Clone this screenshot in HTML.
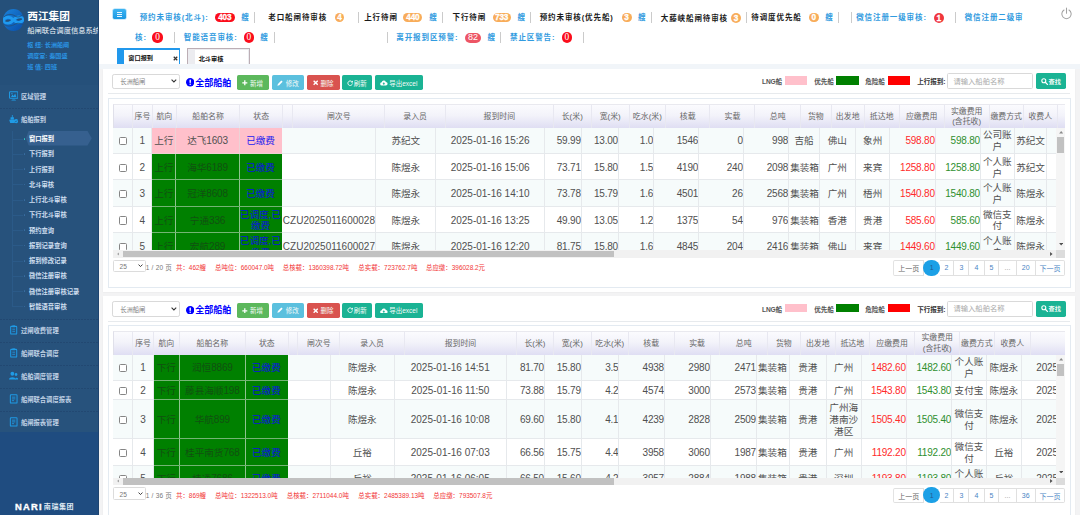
<!DOCTYPE html><html lang="zh-CN"><head><meta charset="utf-8"><title>船闸联合调度信息系统</title><style>
*{box-sizing:border-box;margin:0;padding:0}
html,body{width:1080px;height:515px;overflow:hidden;background:#f3f3f4}
body{position:relative;font-family:"Liberation Sans","Noto Sans CJK SC",sans-serif;color:#444;font-size:9.3px}
.a{position:absolute}
.c{position:absolute;display:flex;align-items:center;justify-content:center;white-space:nowrap}
#side{left:0;top:0;width:99px;height:515px;background:linear-gradient(#25507a 0,#25507a 84.8px,#27527c 84.8px,#27527c 432px,#1f4c80 432px);overflow:hidden;border-right:1px solid #1e4470}
#top{left:99px;top:0;width:981px;height:64px;background:#fff}
.t{position:absolute;white-space:nowrap;font-weight:bold;font-size:7.5px;letter-spacing:.9px;line-height:10px;height:10px}
.bl{color:#319be0}
.bk{color:#1a1a1a}
.sep{position:absolute;width:1px;height:11px;background:#cbcbcb}
.bd{position:absolute;height:9.4px;border-radius:5px;color:#fff;font-weight:bold;font-size:8.2px;letter-spacing:-.1px;display:flex;align-items:center;justify-content:center;line-height:1;padding-top:1.3px;-webkit-text-stroke:.3px #fff}
.or{background:#f8ac59}
.rd{background:#fb0d1b}
.panel{position:absolute;left:103.3px;width:972px;height:223px;background:#fff;box-shadow:0 .5px 1.5px rgba(0,0,0,.06)}
.btn{position:absolute;top:6.5px;height:15.3px;border-radius:1.7px;color:#f4fbf8;font-size:6.5px;font-weight:normal;display:flex;align-items:center;justify-content:center;white-space:nowrap}
.lg{position:absolute;top:9.6px;height:7px;line-height:7px;font-size:6.6px;font-weight:bold;color:#555;white-space:nowrap;letter-spacing:-.1px}
.sw{position:absolute;top:7.7px;height:8.5px;width:22.4px}
.hd{position:absolute;width:952.2px;border-top:1px solid #e9e9ef;border-left:1px solid #e0e0ea;background:linear-gradient(#fbfbfe 0%,#f3f3fa 45%,#dfdef3 100%);overflow:hidden}
.hc{position:absolute;top:0;height:100%;border-left:1px solid #e8e8f1;display:flex;align-items:center;justify-content:center;text-align:center;font-size:7.9px;line-height:10.6px;color:#666;white-space:nowrap;padding-top:1.3px}
.bdy{position:absolute;width:942.7px;overflow:hidden;background:#fff}
.r{position:absolute;left:0;width:100%;border-bottom:1px solid #e6e9ec}
.r.o{background:#f6fbfb}
.d{position:absolute;top:0;height:100%;border-right:1px solid #e6e9ec;display:flex;z-index:0;align-items:center;justify-content:center;text-align:center;font-size:9.6px;line-height:11.8px;color:#505050;overflow:hidden;padding-top:1.8px}
.d.n{justify-content:flex-end;padding-right:0}
.g{background:#008000;color:#115011;border-right-color:#8fc48f;box-shadow:0 1px 0 #74b474}
.pk{background:#ffc0cb;border-right-color:#ecd3d6;box-shadow:0 1px 0 #f0d0d4}
.dg{font-size:10px;letter-spacing:-.2px}
.st{color:#1a1af0}
.g.st{color:#0a10e0;border-right-color:#008000}
.pk.st{border-right-color:#ffc0cb}
.red{color:#ff2a2a}
.grn{color:#2f8f2f}
.cb{width:8.2px;height:8.2px;border:1px solid #858585;border-radius:1.5px;background:#fff}
.pg{position:absolute;top:191.7px;height:15.2px;border:1px solid #e0e0e0;border-left:none;background:#fff;color:#4a84c4;font-size:7px;display:flex;align-items:center;justify-content:center}
.stt{position:absolute;top:195.8px;font-size:6.45px;line-height:8px;color:#f23535;white-space:nowrap}
.mi{position:absolute;left:20.9px;font-size:6.3px;font-weight:bold;color:#c2d2e6;white-space:nowrap;line-height:8px;height:8px}
.sm{position:absolute;left:28.9px;font-size:6.3px;font-weight:bold;color:#cfdff0;white-space:nowrap;line-height:8px;height:8px}
.dsep{position:absolute;left:0;width:99px;height:1px;background:repeating-linear-gradient(90deg,rgba(20,44,84,.26) 0,rgba(20,44,84,.26) 1.8px,transparent 1.8px,transparent 3px)}
</style></head><body>
<div id="side" class="a">
<svg class="a" style="left:2.9px;top:8.8px" width="21" height="22" viewBox="0 0 42 44">
<defs><linearGradient id="lg1" x1="0" y1="0" x2="1" y2="1"><stop offset="0" stop-color="#1b84dc"/><stop offset=".45" stop-color="#126ac4"/><stop offset="1" stop-color="#0a4ca8"/></linearGradient>
<clipPath id="cp1"><ellipse cx="21" cy="22" rx="21" ry="22"/></clipPath></defs>
<g clip-path="url(#cp1)">
<rect width="42" height="44" fill="url(#lg1)"/>
<path d="M-1 24 C5 14 14 15 21 22 S36 29 43 20" stroke="#1f9af0" stroke-width="6" fill="none"/>
<path d="M-1 22 C5 30 14 30 21 22 S36 14 43 22" stroke="#1f9af0" stroke-width="6" fill="none"/>
<path d="M2 15.500 C10 9 18 10 24 14 S35 15 41 11" stroke="#25507a" stroke-width="2" fill="none" opacity=".85"/>
<path d="M2 31 C9 36 18 34 24 30.500 S35 29 41 32" stroke="#25507a" stroke-width="2" fill="none" opacity=".85"/>
<ellipse cx="10" cy="23.500" rx="5.500" ry="1.900" fill="#25507a" transform="rotate(-8 10 23.500)"/>
<ellipse cx="33" cy="20.800" rx="5.500" ry="1.900" fill="#25507a" transform="rotate(-8 33 20.800)"/>
</g>
</svg>
<div class="a" style="left:27.2px;top:9.6px;font-size:10.7px;line-height:13px;font-weight:bold;color:#fff;white-space:nowrap">西江集团</div>
<div class="a" style="left:27.2px;top:26.2px;font-size:7.3px;line-height:10px;color:#eef3f8;white-space:nowrap">船闸联合调度信息系统</div>
<div class="a" style="left:27.2px;top:40.7px;font-size:6.1px;line-height:8px;font-weight:bold;color:#2b93e3;white-space:nowrap">枢 纽: 长洲船闸</div>
<div class="a" style="left:27.2px;top:51.9px;font-size:6.1px;line-height:8px;font-weight:bold;color:#2b93e3;white-space:nowrap">调度室: 秦国盛</div>
<div class="a" style="left:27.2px;top:63.1px;font-size:6.1px;line-height:8px;font-weight:bold;color:#2b93e3;white-space:nowrap">班 值: 四班</div>
<svg class="a" style="left:8.7px;top:91.2px" width="9.4" height="9.800" viewBox="0 0 14 14" preserveAspectRatio="none"><rect x=".8" y="1" width="12.4" height="9.4" rx="1" fill="none" stroke="#1f9be6" stroke-width="1.5"/><path d="M3.500 13.4c0-1.800 7-1.800 7 0z" fill="#1f9be6"/><path d="M3 8.600l2.200-3.600 1.800 2 2.200-3.400 1.800 5z" fill="#1f9be6"/><circle cx="4.400" cy="3.900" r="1" fill="#1f9be6"/></svg>
<div class="mi" style="top:92.5px">区域管理</div>
<svg class="a" style="left:8.7px;top:114.2px" width="9.4" height="9.800" viewBox="0 0 14 14" preserveAspectRatio="none"><path d="M.3 8.200h9.400l-1.300 4.600h-6.600z M2.300 8V4.600h5V8z M4.300 4.600V1.600h1.200v3z" fill="#1f9be6"/><circle cx="10.600" cy="10.300" r="3" fill="#1f9be6"/><path d="M9.200 10.300l1 1 1.800-2" stroke="#27527c" stroke-width=".9" fill="none"/></svg>
<div class="mi" style="top:115.5px">船舶报到</div>
<svg class="a" style="left:8.7px;top:325.2px" width="9.4" height="9.800" viewBox="0 0 14 14" preserveAspectRatio="none"><rect x="2.5" y="2" width="9" height="11" rx="1" fill="none" stroke="#1f9be6" stroke-width="1.5"/><rect x="5" y="0.6" width="4" height="2.6" fill="#1f9be6"/><path d="M5 6h4M5 9h4" stroke="#1f9be6" stroke-width="1.2"/></svg>
<div class="mi" style="top:326.5px">过闸收费管理</div>
<svg class="a" style="left:8.7px;top:348.2px" width="9.4" height="9.800" viewBox="0 0 14 14" preserveAspectRatio="none"><rect x="2.5" y="2" width="9" height="11" rx="1" fill="none" stroke="#1f9be6" stroke-width="1.5"/><rect x="5" y="0.6" width="4" height="2.6" fill="#1f9be6"/><path d="M5 6h4M5 9h4" stroke="#1f9be6" stroke-width="1.2"/></svg>
<div class="mi" style="top:349.5px">船闸联合调度</div>
<svg class="a" style="left:8.7px;top:371.2px" width="9.4" height="9.800" viewBox="0 0 14 14" preserveAspectRatio="none"><circle cx="5" cy="4" r="2.8" fill="#1f9be6"/><path d="M0 12c0-4 10-4 10 0z" fill="#1f9be6"/><circle cx="10.5" cy="5" r="2" fill="#1f9be6"/><path d="M9 12c0-3 5-3 5 0z" fill="#1f9be6"/></svg>
<div class="mi" style="top:372.5px">船舶调度管理</div>
<svg class="a" style="left:8.7px;top:394.2px" width="9.4" height="9.800" viewBox="0 0 14 14" preserveAspectRatio="none"><rect x="2" y="1" width="10" height="12" rx="1" fill="none" stroke="#1f9be6" stroke-width="1.5"/><path d="M4.5 4.5h5M4.5 7h5M4.5 9.5h3" stroke="#1f9be6" stroke-width="1.2"/></svg>
<div class="mi" style="top:395.5px">船闸联合调度报表</div>
<svg class="a" style="left:8.7px;top:417.2px" width="9.4" height="9.800" viewBox="0 0 14 14" preserveAspectRatio="none"><rect x="2" y="1" width="10" height="12" rx="1" fill="none" stroke="#1f9be6" stroke-width="1.5"/><path d="M4.5 4.5h5M4.5 7h5M4.5 9.5h3" stroke="#1f9be6" stroke-width="1.2"/></svg>
<div class="mi" style="top:418.5px">船闸报表管理</div>
<div class="dsep" style="top:108.0px"></div>
<div class="dsep" style="top:318.6px"></div>
<div class="dsep" style="top:341.8px"></div>
<div class="dsep" style="top:364.9px"></div>
<div class="dsep" style="top:388.0px"></div>
<div class="dsep" style="top:411.1px"></div>
<div class="a" style="left:12px;top:131px;width:1px;height:176px;background:#2b5a88"></div>
<svg class="a" style="left:26.3px;top:131.1px" width="65.8" height="14.6" viewBox="0 0 65.8 14.6"><path d="M2.6 0H61.5L65.8 7.3 61.5 14.6H2.6L0 7.3z" fill="#36608f"/></svg>
<div class="a" style="left:12px;top:138.6px;width:11px;height:1px;background:#2b5a88"></div>
<div class="a" style="left:23.5px;top:137.8px;width:1.8px;height:1.8px;border-radius:1px;background:#35c8c8"></div>
<div class="sm" style="color:#fff;top:135.1px">窗口报到</div>
<div class="a" style="left:12px;top:153.8px;width:11px;height:1px;background:#2b5a88"></div>
<div class="a" style="left:23.5px;top:153.0px;width:1.8px;height:1.8px;border-radius:1px;background:#3a6fa3"></div>
<div class="sm" style="top:150.3px">下行报到</div>
<div class="a" style="left:12px;top:169.1px;width:11px;height:1px;background:#2b5a88"></div>
<div class="a" style="left:23.5px;top:168.3px;width:1.8px;height:1.8px;border-radius:1px;background:#3a6fa3"></div>
<div class="sm" style="top:165.6px">上行报到</div>
<div class="a" style="left:12px;top:184.3px;width:11px;height:1px;background:#2b5a88"></div>
<div class="a" style="left:23.5px;top:183.5px;width:1.8px;height:1.8px;border-radius:1px;background:#3a6fa3"></div>
<div class="sm" style="top:180.8px">北斗审核</div>
<div class="a" style="left:12px;top:199.6px;width:11px;height:1px;background:#2b5a88"></div>
<div class="a" style="left:23.5px;top:198.8px;width:1.8px;height:1.8px;border-radius:1px;background:#3a6fa3"></div>
<div class="sm" style="top:196.1px">上行北斗审核</div>
<div class="a" style="left:12px;top:214.8px;width:11px;height:1px;background:#2b5a88"></div>
<div class="a" style="left:23.5px;top:214.0px;width:1.8px;height:1.8px;border-radius:1px;background:#3a6fa3"></div>
<div class="sm" style="top:211.3px">下行北斗审核</div>
<div class="a" style="left:12px;top:230.1px;width:11px;height:1px;background:#2b5a88"></div>
<div class="a" style="left:23.5px;top:229.3px;width:1.8px;height:1.8px;border-radius:1px;background:#3a6fa3"></div>
<div class="sm" style="top:226.6px">预约查询</div>
<div class="a" style="left:12px;top:245.3px;width:11px;height:1px;background:#2b5a88"></div>
<div class="a" style="left:23.5px;top:244.5px;width:1.8px;height:1.8px;border-radius:1px;background:#3a6fa3"></div>
<div class="sm" style="top:241.8px">报到记录查询</div>
<div class="a" style="left:12px;top:260.6px;width:11px;height:1px;background:#2b5a88"></div>
<div class="a" style="left:23.5px;top:259.8px;width:1.8px;height:1.8px;border-radius:1px;background:#3a6fa3"></div>
<div class="sm" style="top:257.1px">报到修改记录</div>
<div class="a" style="left:12px;top:275.9px;width:11px;height:1px;background:#2b5a88"></div>
<div class="a" style="left:23.5px;top:275.1px;width:1.8px;height:1.8px;border-radius:1px;background:#3a6fa3"></div>
<div class="sm" style="top:272.4px">微信注册审核</div>
<div class="a" style="left:12px;top:291.1px;width:11px;height:1px;background:#2b5a88"></div>
<div class="a" style="left:23.5px;top:290.3px;width:1.8px;height:1.8px;border-radius:1px;background:#3a6fa3"></div>
<div class="sm" style="top:287.6px">微信注册审核记录</div>
<div class="a" style="left:12px;top:306.4px;width:11px;height:1px;background:#2b5a88"></div>
<div class="a" style="left:23.5px;top:305.6px;width:1.8px;height:1.8px;border-radius:1px;background:#3a6fa3"></div>
<div class="sm" style="top:302.9px">智能语音审核</div>
<div class="a" style="left:15px;top:500.6px;font-size:9.4px;line-height:11px;font-weight:bold;color:#fff;letter-spacing:1.25px;-webkit-text-stroke:.35px #fff;white-space:nowrap">NARI</div>
<div class="a" style="left:43.8px;top:502px;font-size:7px;line-height:9px;font-weight:bold;color:#dfe8f2;letter-spacing:.6px;white-space:nowrap">南瑞集团</div>
</div>
<div id="top" class="a">
<div class="a" style="left:13.5px;top:9.2px;width:13.3px;height:9.6px;border-radius:1.6px;background:linear-gradient(#3db4f2,#1b98e2);box-shadow:0 0 0 .6px #9bd6f7"></div>
<div class="a" style="left:17.6px;top:11.6px;width:5.2px;height:1px;background:#e8f6ff"></div>
<div class="a" style="left:17.6px;top:13.6px;width:5.2px;height:1px;background:#e8f6ff"></div>
<div class="a" style="left:17.6px;top:15.6px;width:5.2px;height:1px;background:#e8f6ff"></div>
<div class="t bl" style="left:40.7px;top:12.8px">预约未审核(北斗):</div>
<div class="bd rd" style="left:116.0px;width:19.7px;top:12.5px;">403</div>
<div class="t bl" style="left:142.3px;top:12.8px">艘</div>
<div class="sep" style="left:154.7px;top:11.7px"></div>
<div class="t bk" style="left:169.3px;top:12.8px">老口船闸待审核</div>
<div class="bd or" style="left:235.7px;width:9.6px;top:12.7px;">4</div>
<div class="sep" style="left:258.8px;top:11.7px"></div>
<div class="t bk" style="left:265.2px;top:12.8px">上行待闸</div>
<div class="bd or" style="left:304.3px;width:19.2px;top:12.5px;">440</div>
<div class="t bl" style="left:330.2px;top:12.8px">艘</div>
<div class="sep" style="left:343.0px;top:11.7px"></div>
<div class="t bk" style="left:353.5px;top:12.8px">下行待闸</div>
<div class="bd or" style="left:393.5px;width:18.3px;top:12.5px;">733</div>
<div class="t bl" style="left:418.5px;top:12.8px">艘</div>
<div class="sep" style="left:431.0px;top:11.7px"></div>
<div class="t bk" style="left:440.7px;top:12.8px">预约未审核(优先船)</div>
<div class="bd or" style="left:522.5px;width:10.0px;top:12.5px;">3</div>
<div class="t bl" style="left:539.0px;top:12.8px">艘</div>
<div class="sep" style="left:551.8px;top:11.7px"></div>
<div class="t bk" style="left:561.8px;top:13.6px">大藤峡船闸待审核</div>
<div class="bd or" style="left:632.0px;width:10.0px;top:13.3px;">3</div>
<div class="sep" style="left:646.8px;top:11.7px"></div>
<div class="t bk" style="left:652.3px;top:12.8px">待调度优先船</div>
<div class="bd or" style="left:709.7px;width:10.0px;top:12.5px;">0</div>
<div class="t bl" style="left:726.3px;top:12.8px">艘</div>
<div class="sep" style="left:738.8px;top:11.7px"></div>
<div class="sep" style="left:751.8px;top:11.7px"></div>
<div class="t bl" style="left:757.2px;top:12.8px">微信注册一级审核:</div>
<div class="bd rd" style="left:834.6px;width:10.6px;top:12.5px;background:#f0363c;font-size:8.4px;height:10px">1</div>
<div class="sep" style="left:855.8px;top:11.7px"></div>
<div class="t bl" style="left:865.7px;top:12.8px">微信注册二级审</div>
<svg class="a" style="left:961.2px;top:7.4px" width="13" height="13" viewBox="0 0 20 20"><path d="M6.2 4.6a7.2 7.2 0 1 0 7.6 0" fill="none" stroke="#a2a2a2" stroke-width="1.6" stroke-linecap="round"/><path d="M10 1.5v8" stroke="#a2a2a2" stroke-width="1.6" stroke-linecap="round"/></svg>
<div class="t bl" style="left:36.0px;top:33.2px">核:</div>
<div class="bd rd" style="left:53.3px;width:10.7px;top:33.0px;-webkit-text-stroke:0;font-weight:normal;font-family:'Liberation Serif',serif;font-size:9.4px;height:10.4px;top:32.3px">0</div>
<div class="sep" style="left:74.7px;top:31.7px"></div>
<div class="t bl" style="left:84.8px;top:33.2px">智能语音审核:</div>
<div class="bd rd" style="left:144.7px;width:10.3px;top:33.0px;-webkit-text-stroke:0;font-weight:normal;font-family:'Liberation Serif',serif;font-size:9.4px;height:10.4px;top:32.3px">0</div>
<div class="t bl" style="left:161.3px;top:33.2px">艘</div>
<div class="sep" style="left:174.7px;top:31.7px"></div>
<div class="sep" style="left:288.0px;top:31.7px"></div>
<div class="t bl" style="left:297.3px;top:33.2px">离开报到区预警:</div>
<div class="bd rd" style="left:366.0px;width:15.8px;top:32.9px;-webkit-text-stroke:0;background:#ed5565;font-weight:normal;font-size:9px;height:10px;top:32.5px;padding-top:.6px">82</div>
<div class="t bl" style="left:388.5px;top:33.2px">艘</div>
<div class="sep" style="left:400.8px;top:31.7px"></div>
<div class="t bl" style="left:411.0px;top:33.2px">禁止区警告:</div>
<div class="bd rd" style="left:462.6px;width:10.3px;top:33.0px;-webkit-text-stroke:0;font-weight:normal;font-family:'Liberation Serif',serif;font-size:9.4px;height:10.4px;top:32.3px">0</div>
<div class="sep" style="left:483.5px;top:31.7px"></div>
<div class="a" style="left:18.2px;top:48.1px;width:62.6px;height:15.9px;background:#fff;border-top:2px solid #2198ec;border-right:1.3px solid #2198ec;border-left:7px solid #2198ec;border-radius:1px 1px 0 0"></div>
<div class="a" style="left:29.3px;top:53.4px;font-size:6.2px;line-height:9px;font-weight:bold;color:#111;white-space:nowrap">窗口报到</div>
<svg class="a" style="left:74px;top:55.6px" width="5" height="5" viewBox="0 0 10 10"><path d="M1.5 1.5l7 7M8.500 1.500l-7 7" stroke="#333" stroke-width="2.4"/></svg>
<div class="a" style="left:87.6px;top:48.3px;width:63px;height:15.7px;background:#ececf0;border:1px solid #bcaeb5;border-bottom:none"></div>
<div class="a" style="left:95.6px;top:50.4px;width:53.6px;height:13.6px;background:#fff"></div>
<div class="a" style="left:99.7px;top:53.6px;font-size:6.2px;line-height:9px;font-weight:bold;color:#111;white-space:nowrap">北斗审核</div>
</div>
<div class="a" style="left:99px;top:64px;width:981px;height:4.9px;background:#f1f5f9"></div>
<div class="panel" style="top:68.7px">
<div class="a" style="left:9.1px;top:5.1px;width:67.5px;height:15.3px;border:1px solid #d9d9d9;border-radius:2.2px;background:#fff"></div>
<div class="a" style="left:16.9px;top:9.5px;font-size:6.3px;line-height:8px;color:#808080;white-space:nowrap">长洲船闸</div>
<svg class="a" style="left:68px;top:10.8px" width="5.8" height="4.2" viewBox="0 0 10 7"><path d="M1 1l4 4 4-4" fill="none" stroke="#333" stroke-width="1.8"/></svg>
<svg class="a" style="left:82.5px;top:9.5px" width="8.4" height="8.4" viewBox="0 0 12 12"><circle cx="6" cy="6" r="6" fill="#0000ff"/><rect x="5" y="2" width="2" height="5" rx=".8" fill="#fff"/><circle cx="6" cy="9" r="1.1" fill="#fff"/></svg>
<div class="a" style="left:92px;top:7.9px;font-size:9px;line-height:12px;font-weight:bold;color:#0000ff;white-space:nowrap">全部船舶</div>
<div class="btn" style="left:133.4px;width:32.1px;background:#5cb85c"><svg width="5.6" height="5.6" viewBox="0 0 10 10" style="margin-right:2px"><path d="M5 .5v9M.5 5h9" stroke="#fff" stroke-width="2.3"/></svg>新增</div>
<div class="btn" style="left:168.7px;width:32.2px;background:#5bc0de"><svg width="6.2" height="6.2" viewBox="0 0 10 10" style="margin-right:2.2px"><path d="M.6 9.4l.9-2.9 5.6-5.6 2 2-5.6 5.6z" fill="#fff"/></svg>修改</div>
<div class="btn" style="left:203.4px;width:33.0px;background:#d9534f"><svg width="5.4" height="5.4" viewBox="0 0 10 10" style="margin-right:2.4px"><path d="M1.2 1.2l7.6 7.6M8.8 1.2l-7.6 7.6" stroke="#fff" stroke-width="2.6"/></svg>删除</div>
<div class="btn" style="left:238.7px;width:30.0px;background:#1ab394"><svg width="6.4" height="6.4" viewBox="0 0 12 12" style="margin-right:0"><path d="M10.2 6.6a4.3 4.3 0 1 1-1.2-3.6" fill="none" stroke="#fff" stroke-width="1.7"/><path d="M11.2 .8v4H7.2z" fill="#fff"/></svg>刷新</div>
<div class="btn" style="left:271.4px;width:48.0px;background:#1ab394"><svg width="7.6" height="5.6" viewBox="0 0 14 10" style="margin-right:1.6px"><path d="M3.5 10a3 3 0 0 1-.4-6 4 4 0 0 1 7.7-.4A3.2 3.2 0 0 1 10.8 10z" fill="#fff"/><path d="M7 3.8l2.4 2.8H8v2.2H6V6.6H4.600z" fill="#1ab394"/></svg>导出excel</div>
<div class="lg" style="left:658.7px">LNG船</div><div class="sw" style="left:681.7px;background:#ffc0cb"></div>
<div class="lg" style="left:710.9px">优先船</div><div class="sw" style="left:732.9px;background:#008000"></div>
<div class="lg" style="left:762.0px">危险船</div><div class="sw" style="left:784.3px;background:#ff0000"></div>
<div class="lg" style="left:813.9px;font-size:6.6px;color:#333">上行报到:</div>
<div class="a" style="left:843.9px;top:4.7px;width:86.3px;height:15.7px;border:1px solid #d9d9d9;border-radius:1.6px;background:#fff"></div>
<div class="a" style="left:850.2px;top:8px;font-size:7.3px;line-height:9px;color:#aaa;white-space:nowrap">请输入船舶名称</div>
<div class="btn" style="left:932.5px;width:30.6px;top:4.7px;height:15.8px;background:#1ab394;font-size:6.2px;font-weight:bold"><svg width="7" height="7" viewBox="0 0 12 12" style="margin-right:.3px"><circle cx="4.8" cy="4.8" r="3.4" fill="none" stroke="#fff" stroke-width="1.9"/><path d="M7.4 7.4l3.6 3.6" stroke="#fff" stroke-width="2.2" stroke-linecap="round"/></svg>查找</div>
<div class="a" style="left:4.7px;top:24.5px;width:962.5px;height:1px;background:#e7eaed"></div>
<div class="a" style="left:5px;top:29px;width:962.4px;height:190.3px;border:1px solid #e3eaf1"></div>
<div class="hd" style="left:10.0px;top:35.70px;height:23.20px">
<div class="hc" style="border-left:none;left:-1.5px;width:19.2px"></div>
<div class="hc" style="left:17.7px;width:20.0px">序号</div>
<div class="hc" style="left:37.7px;width:23.7px">航向</div>
<div class="hc" style="left:61.4px;width:63.8px">船舶名称</div>
<div class="hc" style="left:125.2px;width:42.5px">状态</div>
<div class="hc" style="left:167.7px;width:10.0px"></div>
<div class="hc" style="left:177.7px;width:92.5px">闸次号</div>
<div class="hc" style="left:270.2px;width:60.3px">录入员</div>
<div class="hc" style="left:330.5px;width:108.0px">报到时间</div>
<div class="hc" style="left:438.5px;width:37.9px">长(米)</div>
<div class="hc" style="left:476.4px;width:38.0px">宽(米)</div>
<div class="hc" style="left:514.4px;width:36.3px">吃水(米)</div>
<div class="hc" style="left:550.7px;width:44.5px">核载</div>
<div class="hc" style="left:595.2px;width:45.0px">实载</div>
<div class="hc" style="left:640.2px;width:45.5px">总吨</div>
<div class="hc" style="left:685.7px;width:30.7px">货物</div>
<div class="hc" style="left:716.4px;width:33.0px">出发地</div>
<div class="hc" style="left:749.4px;width:35.0px">抵达地</div>
<div class="hc" style="left:784.4px;width:45.0px">应缴费用</div>
<div class="hc" style="left:829.4px;width:45.0px">实缴费用<br>(含托收)</div>
<div class="hc" style="left:874.4px;width:34.1px">缴费方式</div>
<div class="hc" style="left:908.5px;width:33.9px">收费人</div>
<div class="hc" style="left:942.4px;width:8.3px"></div>
</div>
<div class="bdy" style="left:10.0px;top:58.90px;height:122.60px">
<div class="r o" style="top:0.0px;height:26.4px">
<div class="d" style="left:0.0px;width:19.7px"><div class="cb"></div></div>
<div class="d" style="font-size:10px;letter-spacing:-.2px;left:19.7px;width:19.2px">1</div>
<div class="d pk" style="left:38.9px;width:24.1px">上行</div>
<div class="d pk" style="left:63.0px;width:63.4px">达飞<span class="dg">1603</span></div>
<div class="d pk st" style="left:126.4px;width:42.8px">已缴费</div>
<div class="d" style="white-space:nowrap;font-size:10px;left:169.2px;width:93.8px"></div>
<div class="d" style="left:263.0px;width:60.0px">苏纪文</div>
<div class="d" style="white-space:nowrap;font-size:10px;left:323.0px;width:108.7px">2025-01-16 15:26</div>
<div class="d n" style="font-size:10px;letter-spacing:-.2px;left:431.7px;width:36.8px">59.99</div>
<div class="d n" style="font-size:10px;letter-spacing:-.2px;left:468.5px;width:37.2px">13.00</div>
<div class="d n" style="font-size:10px;letter-spacing:-.2px;left:505.7px;width:35.2px">1.0</div>
<div class="d n" style="font-size:10px;letter-spacing:-.2px;left:540.9px;width:45.0px">1546</div>
<div class="d n" style="font-size:10px;letter-spacing:-.2px;left:585.9px;width:44.6px">0</div>
<div class="d n" style="font-size:10px;letter-spacing:-.2px;left:630.5px;width:45.4px">998</div>
<div class="d" style="justify-content:flex-start;padding-left:1px;white-space:nowrap;left:675.9px;width:30.8px"><span style="margin-left:4.2px">吉船</span></div>
<div class="d" style="left:706.7px;width:35.8px">佛山</div>
<div class="d" style="left:742.5px;width:34.7px">象州</div>
<div class="d n red" style="font-size:10px;letter-spacing:-.2px;left:777.2px;width:45.3px">598.80</div>
<div class="d n grn" style="font-size:10px;letter-spacing:-.2px;left:822.5px;width:45.2px">598.80</div>
<div class="d" style="left:867.7px;width:33.7px">公司账<br>户</div>
<div class="d" style="left:901.4px;width:32.8px">苏纪文</div>
<div class="d" style="justify-content:flex-start;padding-left:14.5px;white-space:nowrap;border-right:none;font-size:10px;letter-spacing:-.2px;left:934.2px;width:28.0px"></div>
</div>
<div class="r" style="top:26.4px;height:26.5px">
<div class="d" style="left:0.0px;width:19.7px"><div class="cb"></div></div>
<div class="d" style="font-size:10px;letter-spacing:-.2px;left:19.7px;width:19.2px">2</div>
<div class="d g" style="left:38.9px;width:24.1px">上行</div>
<div class="d g" style="left:63.0px;width:63.4px">海华<span class="dg">6189</span></div>
<div class="d g st" style="left:126.4px;width:42.8px">已缴费</div>
<div class="d" style="white-space:nowrap;font-size:10px;left:169.2px;width:93.8px"></div>
<div class="d" style="left:263.0px;width:60.0px">陈煜永</div>
<div class="d" style="white-space:nowrap;font-size:10px;left:323.0px;width:108.7px">2025-01-16 15:06</div>
<div class="d n" style="font-size:10px;letter-spacing:-.2px;left:431.7px;width:36.8px">73.71</div>
<div class="d n" style="font-size:10px;letter-spacing:-.2px;left:468.5px;width:37.2px">15.80</div>
<div class="d n" style="font-size:10px;letter-spacing:-.2px;left:505.7px;width:35.2px">1.5</div>
<div class="d n" style="font-size:10px;letter-spacing:-.2px;left:540.9px;width:45.0px">4190</div>
<div class="d n" style="font-size:10px;letter-spacing:-.2px;left:585.9px;width:44.6px">240</div>
<div class="d n" style="font-size:10px;letter-spacing:-.2px;left:630.5px;width:45.4px">2098</div>
<div class="d" style="justify-content:flex-start;padding-left:1px;white-space:nowrap;left:675.9px;width:30.8px">集装箱</div>
<div class="d" style="left:706.7px;width:35.8px">广州</div>
<div class="d" style="left:742.5px;width:34.7px">来宾</div>
<div class="d n red" style="font-size:10px;letter-spacing:-.2px;left:777.2px;width:45.3px">1258.80</div>
<div class="d n grn" style="font-size:10px;letter-spacing:-.2px;left:822.5px;width:45.2px">1258.80</div>
<div class="d" style="left:867.7px;width:33.7px">个人账<br>户</div>
<div class="d" style="left:901.4px;width:32.8px">苏纪文</div>
<div class="d" style="justify-content:flex-start;padding-left:14.5px;white-space:nowrap;border-right:none;font-size:10px;letter-spacing:-.2px;left:934.2px;width:28.0px"></div>
</div>
<div class="r o" style="top:52.9px;height:26.3px">
<div class="d" style="left:0.0px;width:19.7px"><div class="cb"></div></div>
<div class="d" style="font-size:10px;letter-spacing:-.2px;left:19.7px;width:19.2px">3</div>
<div class="d g" style="left:38.9px;width:24.1px">上行</div>
<div class="d g" style="left:63.0px;width:63.4px">冠洋<span class="dg">8608</span></div>
<div class="d g st" style="left:126.4px;width:42.8px">已缴费</div>
<div class="d" style="white-space:nowrap;font-size:10px;left:169.2px;width:93.8px"></div>
<div class="d" style="left:263.0px;width:60.0px">陈煜永</div>
<div class="d" style="white-space:nowrap;font-size:10px;left:323.0px;width:108.7px">2025-01-16 14:10</div>
<div class="d n" style="font-size:10px;letter-spacing:-.2px;left:431.7px;width:36.8px">73.78</div>
<div class="d n" style="font-size:10px;letter-spacing:-.2px;left:468.5px;width:37.2px">15.79</div>
<div class="d n" style="font-size:10px;letter-spacing:-.2px;left:505.7px;width:35.2px">1.6</div>
<div class="d n" style="font-size:10px;letter-spacing:-.2px;left:540.9px;width:45.0px">4501</div>
<div class="d n" style="font-size:10px;letter-spacing:-.2px;left:585.9px;width:44.6px">26</div>
<div class="d n" style="font-size:10px;letter-spacing:-.2px;left:630.5px;width:45.4px">2568</div>
<div class="d" style="justify-content:flex-start;padding-left:1px;white-space:nowrap;left:675.9px;width:30.8px">集装箱</div>
<div class="d" style="left:706.7px;width:35.8px">广州</div>
<div class="d" style="left:742.5px;width:34.7px">梧州</div>
<div class="d n red" style="font-size:10px;letter-spacing:-.2px;left:777.2px;width:45.3px">1540.80</div>
<div class="d n grn" style="font-size:10px;letter-spacing:-.2px;left:822.5px;width:45.2px">1540.80</div>
<div class="d" style="left:867.7px;width:33.7px">个人账<br>户</div>
<div class="d" style="left:901.4px;width:32.8px">陈煜永</div>
<div class="d" style="justify-content:flex-start;padding-left:14.5px;white-space:nowrap;border-right:none;font-size:10px;letter-spacing:-.2px;left:934.2px;width:28.0px"></div>
</div>
<div class="r" style="top:79.2px;height:26.5px">
<div class="d" style="left:0.0px;width:19.7px"><div class="cb"></div></div>
<div class="d" style="font-size:10px;letter-spacing:-.2px;left:19.7px;width:19.2px">4</div>
<div class="d g" style="left:38.9px;width:24.1px">上行</div>
<div class="d g" style="left:63.0px;width:63.4px">宁通<span class="dg">336</span></div>
<div class="d g st" style="left:126.4px;width:42.8px">已调度,已<br>缴费</div>
<div class="d" style="white-space:nowrap;font-size:10px;left:169.2px;width:93.8px">CZU2025011600028</div>
<div class="d" style="left:263.0px;width:60.0px">陈煜永</div>
<div class="d" style="white-space:nowrap;font-size:10px;left:323.0px;width:108.7px">2025-01-16 13:25</div>
<div class="d n" style="font-size:10px;letter-spacing:-.2px;left:431.7px;width:36.8px">49.90</div>
<div class="d n" style="font-size:10px;letter-spacing:-.2px;left:468.5px;width:37.2px">13.05</div>
<div class="d n" style="font-size:10px;letter-spacing:-.2px;left:505.7px;width:35.2px">1.2</div>
<div class="d n" style="font-size:10px;letter-spacing:-.2px;left:540.9px;width:45.0px">1375</div>
<div class="d n" style="font-size:10px;letter-spacing:-.2px;left:585.9px;width:44.6px">54</div>
<div class="d n" style="font-size:10px;letter-spacing:-.2px;left:630.5px;width:45.4px">976</div>
<div class="d" style="justify-content:flex-start;padding-left:1px;white-space:nowrap;left:675.9px;width:30.8px">集装箱</div>
<div class="d" style="left:706.7px;width:35.8px">香港</div>
<div class="d" style="left:742.5px;width:34.7px">贵港</div>
<div class="d n red" style="font-size:10px;letter-spacing:-.2px;left:777.2px;width:45.3px">585.60</div>
<div class="d n grn" style="font-size:10px;letter-spacing:-.2px;left:822.5px;width:45.2px">585.60</div>
<div class="d" style="left:867.7px;width:33.7px">微信支<br>付</div>
<div class="d" style="left:901.4px;width:32.8px">陈煜永</div>
<div class="d" style="justify-content:flex-start;padding-left:14.5px;white-space:nowrap;border-right:none;font-size:10px;letter-spacing:-.2px;left:934.2px;width:28.0px"></div>
</div>
<div class="r o" style="top:105.7px;height:26.3px">
<div class="d" style="left:0.0px;width:19.7px"><div class="cb"></div></div>
<div class="d" style="font-size:10px;letter-spacing:-.2px;left:19.7px;width:19.2px">5</div>
<div class="d g" style="left:38.9px;width:24.1px">上行</div>
<div class="d g" style="left:63.0px;width:63.4px">宏航<span class="dg">289</span></div>
<div class="d g st" style="left:126.4px;width:42.8px">已调度,已<br>缴费</div>
<div class="d" style="white-space:nowrap;font-size:10px;left:169.2px;width:93.8px">CZU2025011600027</div>
<div class="d" style="left:263.0px;width:60.0px">陈煜永</div>
<div class="d" style="white-space:nowrap;font-size:10px;left:323.0px;width:108.7px">2025-01-16 12:20</div>
<div class="d n" style="font-size:10px;letter-spacing:-.2px;left:431.7px;width:36.8px">81.75</div>
<div class="d n" style="font-size:10px;letter-spacing:-.2px;left:468.5px;width:37.2px">15.80</div>
<div class="d n" style="font-size:10px;letter-spacing:-.2px;left:505.7px;width:35.2px">1.6</div>
<div class="d n" style="font-size:10px;letter-spacing:-.2px;left:540.9px;width:45.0px">4845</div>
<div class="d n" style="font-size:10px;letter-spacing:-.2px;left:585.9px;width:44.6px">204</div>
<div class="d n" style="font-size:10px;letter-spacing:-.2px;left:630.5px;width:45.4px">2416</div>
<div class="d" style="justify-content:flex-start;padding-left:1px;white-space:nowrap;left:675.9px;width:30.8px">集装箱</div>
<div class="d" style="left:706.7px;width:35.8px">佛山</div>
<div class="d" style="left:742.5px;width:34.7px">来宾</div>
<div class="d n red" style="font-size:10px;letter-spacing:-.2px;left:777.2px;width:45.3px">1449.60</div>
<div class="d n grn" style="font-size:10px;letter-spacing:-.2px;left:822.5px;width:45.2px">1449.60</div>
<div class="d" style="left:867.7px;width:33.7px">个人账<br>户</div>
<div class="d" style="left:901.4px;width:32.8px">陈煜永</div>
<div class="d" style="justify-content:flex-start;padding-left:14.5px;white-space:nowrap;border-right:none;font-size:10px;letter-spacing:-.2px;left:934.2px;width:28.0px"></div>
</div>
</div>
<div class="a" style="left:952.7px;top:58.90px;width:9.5px;height:122.60px;background:#f5f5f5"></div>
<div class="a" style="left:954.2px;top:68.8px;width:6.8px;height:15.5px;background:#c1c1c1"></div>
<svg class="a" style="left:955.4px;top:62.6px" width="4.4" height="2.6" viewBox="0 0 8 5"><path d="M0 5l4-5 4 5z" fill="#8a8a8a"/></svg>
<svg class="a" style="left:955.4px;top:174.7px" width="4.4" height="2.6" viewBox="0 0 8 5"><path d="M0 0l4 5 4-5z" fill="#505050"/></svg>
<div class="a" style="left:10.0px;top:181.50px;width:942.7px;height:7.8px;background:#f1f1f1"></div>
<div class="a" style="left:19.5px;top:182.30px;width:491.2px;height:6.2px;background:#c1c1c1"></div>
<svg class="a" style="left:13.3px;top:183.40px" width="2.6" height="4" viewBox="0 0 5 8"><path d="M5 0l-5 4 5 4z" fill="#a3a3a3"/></svg>
<svg class="a" style="left:946.7px;top:183.40px" width="2.6" height="4" viewBox="0 0 5 8"><path d="M0 0l5 4-5 4z" fill="#505050"/></svg>
<div class="a" style="left:952.7px;top:181.50px;width:9.5px;height:7.8px;background:#dcdcdc"></div>
<div class="a" style="left:10px;top:191px;width:32.3px;height:12.7px;border:1px solid #dcdcdc;border-radius:1.5px;background:#fff"></div>
<div class="a" style="left:16.3px;top:194.4px;font-size:6.6px;line-height:7px;color:#777">25</div>
<svg class="a" style="left:34.5px;top:195.4px" width="5" height="3.6" viewBox="0 0 10 7"><path d="M1 1l4 4 4-4" fill="none" stroke="#333" stroke-width="1.9"/></svg>
<div class="a" style="left:42.5px;top:195.4px;font-size:6.5px;line-height:8px;color:#777;white-space:nowrap;letter-spacing:.2px">1 / 20 页</div>
<div class="stt" style="left:72.7px">共：462艘</div>
<div class="stt" style="left:111.7px">总吨位：660047.0吨</div>
<div class="stt" style="left:179.4px">总核载：1360398.72吨</div>
<div class="stt" style="left:255.0px">总实载：723762.7吨</div>
<div class="stt" style="left:322.7px">总应缴：396028.2元</div>
<div class="pg" style="color:#666;border-left:1px solid #e3e3e3;border-radius:2px 0 0 2px;left:790.2px;width:30.5px">上一页</div>
<div class="pg" style="left:836.3px;width:14.8px">2</div>
<div class="pg" style="left:851.1px;width:15.0px">3</div>
<div class="pg" style="left:866.1px;width:15.2px">4</div>
<div class="pg" style="left:881.3px;width:14.8px">5</div>
<div class="pg" style="color:#999;left:896.1px;width:17.3px">...</div>
<div class="pg" style="left:913.4px;width:18.9px">20</div>
<div class="pg" style="border-radius:0 2px 2px 0;left:932.3px;width:29.6px">下一页</div>
<div class="a" style="left:820.2px;top:191px;width:16.2px;height:16.2px;border-radius:50%;background:#1ca0e6;color:#255a94;font-size:7px;display:flex;align-items:center;justify-content:center">1</div>
</div>
<div class="panel" style="top:296.3px">
<div class="a" style="left:9.1px;top:5.1px;width:67.5px;height:15.3px;border:1px solid #d9d9d9;border-radius:2.2px;background:#fff"></div>
<div class="a" style="left:16.9px;top:9.5px;font-size:6.3px;line-height:8px;color:#808080;white-space:nowrap">长洲船闸</div>
<svg class="a" style="left:68px;top:10.8px" width="5.8" height="4.2" viewBox="0 0 10 7"><path d="M1 1l4 4 4-4" fill="none" stroke="#333" stroke-width="1.8"/></svg>
<svg class="a" style="left:82.5px;top:9.5px" width="8.4" height="8.4" viewBox="0 0 12 12"><circle cx="6" cy="6" r="6" fill="#0000ff"/><rect x="5" y="2" width="2" height="5" rx=".8" fill="#fff"/><circle cx="6" cy="9" r="1.1" fill="#fff"/></svg>
<div class="a" style="left:92px;top:7.9px;font-size:9px;line-height:12px;font-weight:bold;color:#0000ff;white-space:nowrap">全部船舶</div>
<div class="btn" style="left:133.4px;width:32.1px;background:#5cb85c"><svg width="5.6" height="5.6" viewBox="0 0 10 10" style="margin-right:2px"><path d="M5 .5v9M.5 5h9" stroke="#fff" stroke-width="2.3"/></svg>新增</div>
<div class="btn" style="left:168.7px;width:32.2px;background:#5bc0de"><svg width="6.2" height="6.2" viewBox="0 0 10 10" style="margin-right:2.2px"><path d="M.6 9.4l.9-2.9 5.6-5.6 2 2-5.6 5.6z" fill="#fff"/></svg>修改</div>
<div class="btn" style="left:203.4px;width:33.0px;background:#d9534f"><svg width="5.4" height="5.4" viewBox="0 0 10 10" style="margin-right:2.4px"><path d="M1.2 1.2l7.6 7.6M8.8 1.2l-7.6 7.6" stroke="#fff" stroke-width="2.6"/></svg>删除</div>
<div class="btn" style="left:238.7px;width:30.0px;background:#1ab394"><svg width="6.4" height="6.4" viewBox="0 0 12 12" style="margin-right:0"><path d="M10.2 6.6a4.3 4.3 0 1 1-1.2-3.6" fill="none" stroke="#fff" stroke-width="1.7"/><path d="M11.2 .8v4H7.2z" fill="#fff"/></svg>刷新</div>
<div class="btn" style="left:271.4px;width:48.0px;background:#1ab394"><svg width="7.6" height="5.6" viewBox="0 0 14 10" style="margin-right:1.6px"><path d="M3.5 10a3 3 0 0 1-.4-6 4 4 0 0 1 7.7-.4A3.2 3.2 0 0 1 10.8 10z" fill="#fff"/><path d="M7 3.8l2.4 2.8H8v2.2H6V6.6H4.600z" fill="#1ab394"/></svg>导出excel</div>
<div class="lg" style="left:658.7px">LNG船</div><div class="sw" style="left:681.7px;background:#ffc0cb"></div>
<div class="lg" style="left:710.9px">优先船</div><div class="sw" style="left:732.9px;background:#008000"></div>
<div class="lg" style="left:762.0px">危险船</div><div class="sw" style="left:784.3px;background:#ff0000"></div>
<div class="lg" style="left:813.9px;font-size:6.6px;color:#333">下行报到:</div>
<div class="a" style="left:843.9px;top:4.7px;width:86.3px;height:15.7px;border:1px solid #d9d9d9;border-radius:1.6px;background:#fff"></div>
<div class="a" style="left:850.2px;top:8px;font-size:7.3px;line-height:9px;color:#aaa;white-space:nowrap">请输入船舶名称</div>
<div class="btn" style="left:932.5px;width:30.6px;top:4.7px;height:15.8px;background:#1ab394;font-size:6.2px;font-weight:bold"><svg width="7" height="7" viewBox="0 0 12 12" style="margin-right:.3px"><circle cx="4.8" cy="4.8" r="3.4" fill="none" stroke="#fff" stroke-width="1.9"/><path d="M7.4 7.4l3.6 3.6" stroke="#fff" stroke-width="2.2" stroke-linecap="round"/></svg>查找</div>
<div class="a" style="left:4.7px;top:24.5px;width:962.5px;height:1px;background:#e7eaed"></div>
<div class="a" style="left:5px;top:29px;width:962.4px;height:190.3px;border:1px solid #e3eaf1"></div>
<div class="hd" style="left:10.0px;top:34.90px;height:23.40px">
<div class="hc" style="border-left:none;left:-1.5px;width:19.5px"></div>
<div class="hc" style="left:18.0px;width:20.5px">序号</div>
<div class="hc" style="left:38.5px;width:26.0px">航向</div>
<div class="hc" style="left:64.5px;width:66.0px">船舶名称</div>
<div class="hc" style="left:130.5px;width:43.0px">状态</div>
<div class="hc" style="left:173.5px;width:9.2px"></div>
<div class="hc" style="left:182.7px;width:42.5px">闸次号</div>
<div class="hc" style="left:225.2px;width:64.2px">录入员</div>
<div class="hc" style="left:289.4px;width:112.5px">报到时间</div>
<div class="hc" style="left:401.9px;width:36.6px">长(米)</div>
<div class="hc" style="left:438.5px;width:37.9px">宽(米)</div>
<div class="hc" style="left:476.4px;width:37.1px">吃水(米)</div>
<div class="hc" style="left:513.5px;width:45.9px">核载</div>
<div class="hc" style="left:559.4px;width:45.8px">实载</div>
<div class="hc" style="left:605.2px;width:47.3px">总吨</div>
<div class="hc" style="left:652.5px;width:33.0px">货物</div>
<div class="hc" style="left:685.5px;width:35.0px">出发地</div>
<div class="hc" style="left:720.5px;width:33.9px">抵达地</div>
<div class="hc" style="left:754.4px;width:45.8px">应缴费用</div>
<div class="hc" style="left:800.2px;width:44.5px">实缴费用<br>(含托收)</div>
<div class="hc" style="left:844.7px;width:34.7px">缴费方式</div>
<div class="hc" style="left:879.4px;width:36.1px">收费人</div>
<div class="hc" style="left:915.5px;width:35.2px"></div>
</div>
<div class="bdy" style="left:10.0px;top:58.30px;height:123.00px">
<div class="r o" style="top:0.0px;height:26.3px">
<div class="d" style="left:0.0px;width:19.7px"><div class="cb"></div></div>
<div class="d" style="font-size:10px;letter-spacing:-.2px;left:19.7px;width:20.7px">1</div>
<div class="d g" style="left:40.4px;width:26.1px">下行</div>
<div class="d g" style="left:66.5px;width:66.0px">润恒<span class="dg">8869</span></div>
<div class="d g st" style="left:132.5px;width:42.2px">已缴费</div>
<div class="d" style="white-space:nowrap;font-size:10px;left:174.7px;width:43.0px"></div>
<div class="d" style="left:217.7px;width:63.7px">陈煜永</div>
<div class="d" style="white-space:nowrap;font-size:10px;left:281.4px;width:112.1px">2025-01-16 14:51</div>
<div class="d n" style="font-size:10px;letter-spacing:-.2px;left:393.5px;width:38.2px">81.70</div>
<div class="d n" style="font-size:10px;letter-spacing:-.2px;left:431.7px;width:36.8px">15.80</div>
<div class="d n" style="font-size:10px;letter-spacing:-.2px;left:468.5px;width:37.7px">3.5</div>
<div class="d n" style="font-size:10px;letter-spacing:-.2px;left:506.2px;width:45.5px">4938</div>
<div class="d n" style="font-size:10px;letter-spacing:-.2px;left:551.7px;width:45.8px">2980</div>
<div class="d n" style="font-size:10px;letter-spacing:-.2px;left:597.5px;width:46.2px">2471</div>
<div class="d" style="justify-content:flex-start;padding-left:1px;white-space:nowrap;left:643.7px;width:33.0px">集装箱</div>
<div class="d" style="left:676.7px;width:36.7px">贵港</div>
<div class="d" style="left:713.4px;width:35.0px">广州</div>
<div class="d n red" style="font-size:10px;letter-spacing:-.2px;left:748.4px;width:45.1px">1482.60</div>
<div class="d n grn" style="font-size:10px;letter-spacing:-.2px;left:793.5px;width:45.4px">1482.60</div>
<div class="d" style="left:838.9px;width:34.6px">个人账<br>户</div>
<div class="d" style="left:873.5px;width:35.0px">陈煜永</div>
<div class="d" style="justify-content:flex-start;padding-left:14.5px;white-space:nowrap;border-right:none;font-size:10px;letter-spacing:-.2px;left:908.5px;width:53.7px">2025-01-16</div>
</div>
<div class="r" style="top:26.3px;height:19.0px">
<div class="d" style="left:0.0px;width:19.7px"><div class="cb"></div></div>
<div class="d" style="font-size:10px;letter-spacing:-.2px;left:19.7px;width:20.7px">2</div>
<div class="d g" style="left:40.4px;width:26.1px">下行</div>
<div class="d g" style="left:66.5px;width:66.0px">藤县海顺<span class="dg">198</span></div>
<div class="d g st" style="left:132.5px;width:42.2px">已缴费</div>
<div class="d" style="white-space:nowrap;font-size:10px;left:174.7px;width:43.0px"></div>
<div class="d" style="left:217.7px;width:63.7px">陈煜永</div>
<div class="d" style="white-space:nowrap;font-size:10px;left:281.4px;width:112.1px">2025-01-16 11:50</div>
<div class="d n" style="font-size:10px;letter-spacing:-.2px;left:393.5px;width:38.2px">73.88</div>
<div class="d n" style="font-size:10px;letter-spacing:-.2px;left:431.7px;width:36.8px">15.79</div>
<div class="d n" style="font-size:10px;letter-spacing:-.2px;left:468.5px;width:37.7px">4.2</div>
<div class="d n" style="font-size:10px;letter-spacing:-.2px;left:506.2px;width:45.5px">4574</div>
<div class="d n" style="font-size:10px;letter-spacing:-.2px;left:551.7px;width:45.8px">3000</div>
<div class="d n" style="font-size:10px;letter-spacing:-.2px;left:597.5px;width:46.2px">2573</div>
<div class="d" style="justify-content:flex-start;padding-left:1px;white-space:nowrap;left:643.7px;width:33.0px">集装箱</div>
<div class="d" style="left:676.7px;width:36.7px">贵港</div>
<div class="d" style="left:713.4px;width:35.0px">广州</div>
<div class="d n red" style="font-size:10px;letter-spacing:-.2px;left:748.4px;width:45.1px">1543.80</div>
<div class="d n grn" style="font-size:10px;letter-spacing:-.2px;left:793.5px;width:45.4px">1543.80</div>
<div class="d" style="left:838.9px;width:34.6px">支付宝</div>
<div class="d" style="left:873.5px;width:35.0px">陈煜永</div>
<div class="d" style="justify-content:flex-start;padding-left:14.5px;white-space:nowrap;border-right:none;font-size:10px;letter-spacing:-.2px;left:908.5px;width:53.7px">2025-01-16</div>
</div>
<div class="r o" style="top:45.3px;height:39.0px">
<div class="d" style="left:0.0px;width:19.7px"><div class="cb"></div></div>
<div class="d" style="font-size:10px;letter-spacing:-.2px;left:19.7px;width:20.7px">3</div>
<div class="d g" style="left:40.4px;width:26.1px">下行</div>
<div class="d g" style="left:66.5px;width:66.0px">华航<span class="dg">899</span></div>
<div class="d g st" style="left:132.5px;width:42.2px">已缴费</div>
<div class="d" style="white-space:nowrap;font-size:10px;left:174.7px;width:43.0px"></div>
<div class="d" style="left:217.7px;width:63.7px">陈煜永</div>
<div class="d" style="white-space:nowrap;font-size:10px;left:281.4px;width:112.1px">2025-01-16 10:08</div>
<div class="d n" style="font-size:10px;letter-spacing:-.2px;left:393.5px;width:38.2px">69.60</div>
<div class="d n" style="font-size:10px;letter-spacing:-.2px;left:431.7px;width:36.8px">15.80</div>
<div class="d n" style="font-size:10px;letter-spacing:-.2px;left:468.5px;width:37.7px">4.1</div>
<div class="d n" style="font-size:10px;letter-spacing:-.2px;left:506.2px;width:45.5px">4239</div>
<div class="d n" style="font-size:10px;letter-spacing:-.2px;left:551.7px;width:45.8px">2828</div>
<div class="d n" style="font-size:10px;letter-spacing:-.2px;left:597.5px;width:46.2px">2509</div>
<div class="d" style="justify-content:flex-start;padding-left:1px;white-space:nowrap;left:643.7px;width:33.0px">集装箱</div>
<div class="d" style="left:676.7px;width:36.7px">贵港</div>
<div class="d" style="left:713.4px;width:35.0px">广州海<br>港南沙<br>港区</div>
<div class="d n red" style="font-size:10px;letter-spacing:-.2px;left:748.4px;width:45.1px">1505.40</div>
<div class="d n grn" style="font-size:10px;letter-spacing:-.2px;left:793.5px;width:45.4px">1505.40</div>
<div class="d" style="left:838.9px;width:34.6px">微信支<br>付</div>
<div class="d" style="left:873.5px;width:35.0px">陈煜永</div>
<div class="d" style="justify-content:flex-start;padding-left:14.5px;white-space:nowrap;border-right:none;font-size:10px;letter-spacing:-.2px;left:908.5px;width:53.7px">2025-01-16</div>
</div>
<div class="r" style="top:84.3px;height:26.9px">
<div class="d" style="left:0.0px;width:19.7px"><div class="cb"></div></div>
<div class="d" style="font-size:10px;letter-spacing:-.2px;left:19.7px;width:20.7px">4</div>
<div class="d g" style="left:40.4px;width:26.1px">下行</div>
<div class="d g" style="left:66.5px;width:66.0px">桂平南货<span class="dg">768</span></div>
<div class="d g st" style="left:132.5px;width:42.2px">已缴费</div>
<div class="d" style="white-space:nowrap;font-size:10px;left:174.7px;width:43.0px"></div>
<div class="d" style="left:217.7px;width:63.7px">丘裕</div>
<div class="d" style="white-space:nowrap;font-size:10px;left:281.4px;width:112.1px">2025-01-16 07:03</div>
<div class="d n" style="font-size:10px;letter-spacing:-.2px;left:393.5px;width:38.2px">66.56</div>
<div class="d n" style="font-size:10px;letter-spacing:-.2px;left:431.7px;width:36.8px">15.75</div>
<div class="d n" style="font-size:10px;letter-spacing:-.2px;left:468.5px;width:37.7px">4.4</div>
<div class="d n" style="font-size:10px;letter-spacing:-.2px;left:506.2px;width:45.5px">3958</div>
<div class="d n" style="font-size:10px;letter-spacing:-.2px;left:551.7px;width:45.8px">3060</div>
<div class="d n" style="font-size:10px;letter-spacing:-.2px;left:597.5px;width:46.2px">1987</div>
<div class="d" style="justify-content:flex-start;padding-left:1px;white-space:nowrap;left:643.7px;width:33.0px">集装箱</div>
<div class="d" style="left:676.7px;width:36.7px">贵港</div>
<div class="d" style="left:713.4px;width:35.0px">广州</div>
<div class="d n red" style="font-size:10px;letter-spacing:-.2px;left:748.4px;width:45.1px">1192.20</div>
<div class="d n grn" style="font-size:10px;letter-spacing:-.2px;left:793.5px;width:45.4px">1192.20</div>
<div class="d" style="left:838.9px;width:34.6px">微信支<br>付</div>
<div class="d" style="left:873.5px;width:35.0px">丘裕</div>
<div class="d" style="justify-content:flex-start;padding-left:14.5px;white-space:nowrap;border-right:none;font-size:10px;letter-spacing:-.2px;left:908.5px;width:53.7px">2025-01-16</div>
</div>
<div class="r o" style="top:111.2px;height:26.3px">
<div class="d" style="left:0.0px;width:19.7px"><div class="cb"></div></div>
<div class="d" style="font-size:10px;letter-spacing:-.2px;left:19.7px;width:20.7px">5</div>
<div class="d g" style="left:40.4px;width:26.1px">下行</div>
<div class="d g" style="left:66.5px;width:66.0px">桂通<span class="dg">7686</span></div>
<div class="d g st" style="left:132.5px;width:42.2px">已缴费</div>
<div class="d" style="white-space:nowrap;font-size:10px;left:174.7px;width:43.0px"></div>
<div class="d" style="left:217.7px;width:63.7px">丘裕</div>
<div class="d" style="white-space:nowrap;font-size:10px;left:281.4px;width:112.1px">2025-01-16 06:05</div>
<div class="d n" style="font-size:10px;letter-spacing:-.2px;left:393.5px;width:38.2px">66.50</div>
<div class="d n" style="font-size:10px;letter-spacing:-.2px;left:431.7px;width:36.8px">15.60</div>
<div class="d n" style="font-size:10px;letter-spacing:-.2px;left:468.5px;width:37.7px">4.2</div>
<div class="d n" style="font-size:10px;letter-spacing:-.2px;left:506.2px;width:45.5px">3957</div>
<div class="d n" style="font-size:10px;letter-spacing:-.2px;left:551.7px;width:45.8px">2884</div>
<div class="d n" style="font-size:10px;letter-spacing:-.2px;left:597.5px;width:46.2px">1988</div>
<div class="d" style="justify-content:flex-start;padding-left:1px;white-space:nowrap;left:643.7px;width:33.0px">集装箱</div>
<div class="d" style="left:676.7px;width:36.7px">贵港</div>
<div class="d" style="left:713.4px;width:35.0px">深圳</div>
<div class="d n red" style="font-size:10px;letter-spacing:-.2px;left:748.4px;width:45.1px">1193.80</div>
<div class="d n grn" style="font-size:10px;letter-spacing:-.2px;left:793.5px;width:45.4px">1193.80</div>
<div class="d" style="left:838.9px;width:34.6px">个人账<br>户</div>
<div class="d" style="left:873.5px;width:35.0px">丘裕</div>
<div class="d" style="justify-content:flex-start;padding-left:14.5px;white-space:nowrap;border-right:none;font-size:10px;letter-spacing:-.2px;left:908.5px;width:53.7px">2025-01-16</div>
</div>
</div>
<div class="a" style="left:952.7px;top:58.30px;width:9.5px;height:123.00px;background:#f5f5f5"></div>
<div class="a" style="left:954.2px;top:67.9px;width:6.8px;height:12.1px;background:#c1c1c1"></div>
<svg class="a" style="left:955.4px;top:62.0px" width="4.4" height="2.6" viewBox="0 0 8 5"><path d="M0 5l4-5 4 5z" fill="#8a8a8a"/></svg>
<svg class="a" style="left:955.4px;top:174.5px" width="4.4" height="2.6" viewBox="0 0 8 5"><path d="M0 0l4 5 4-5z" fill="#505050"/></svg>
<div class="a" style="left:10.0px;top:181.30px;width:942.7px;height:7.8px;background:#f1f1f1"></div>
<div class="a" style="left:19.5px;top:182.10px;width:491.2px;height:6.2px;background:#c1c1c1"></div>
<svg class="a" style="left:13.3px;top:183.20px" width="2.6" height="4" viewBox="0 0 5 8"><path d="M5 0l-5 4 5 4z" fill="#a3a3a3"/></svg>
<svg class="a" style="left:946.7px;top:183.20px" width="2.6" height="4" viewBox="0 0 5 8"><path d="M0 0l5 4-5 4z" fill="#505050"/></svg>
<div class="a" style="left:952.7px;top:181.30px;width:9.5px;height:7.8px;background:#dcdcdc"></div>
<div class="a" style="left:10px;top:191px;width:32.3px;height:12.7px;border:1px solid #dcdcdc;border-radius:1.5px;background:#fff"></div>
<div class="a" style="left:16.3px;top:194.4px;font-size:6.6px;line-height:7px;color:#777">25</div>
<svg class="a" style="left:34.5px;top:195.4px" width="5" height="3.6" viewBox="0 0 10 7"><path d="M1 1l4 4 4-4" fill="none" stroke="#333" stroke-width="1.9"/></svg>
<div class="a" style="left:42.5px;top:195.4px;font-size:6.5px;line-height:8px;color:#777;white-space:nowrap;letter-spacing:.2px">1 / 36 页</div>
<div class="stt" style="left:72.7px">共：869艘</div>
<div class="stt" style="left:111.7px">总吨位：1322513.0吨</div>
<div class="stt" style="left:183.4px">总核载：2711044.0吨</div>
<div class="stt" style="left:255.0px">总实载：2485389.13吨</div>
<div class="stt" style="left:330.0px">总应缴：793507.8元</div>
<div class="pg" style="color:#666;border-left:1px solid #e3e3e3;border-radius:2px 0 0 2px;left:790.2px;width:30.5px">上一页</div>
<div class="pg" style="left:836.3px;width:14.8px">2</div>
<div class="pg" style="left:851.1px;width:15.0px">3</div>
<div class="pg" style="left:866.1px;width:15.2px">4</div>
<div class="pg" style="left:881.3px;width:14.8px">5</div>
<div class="pg" style="color:#999;left:896.1px;width:17.3px">...</div>
<div class="pg" style="left:913.4px;width:18.9px">36</div>
<div class="pg" style="border-radius:0 2px 2px 0;left:932.3px;width:29.6px">下一页</div>
<div class="a" style="left:820.2px;top:191px;width:16.2px;height:16.2px;border-radius:50%;background:#1ca0e6;color:#255a94;font-size:7px;display:flex;align-items:center;justify-content:center">1</div>
</div>
</body></html>
